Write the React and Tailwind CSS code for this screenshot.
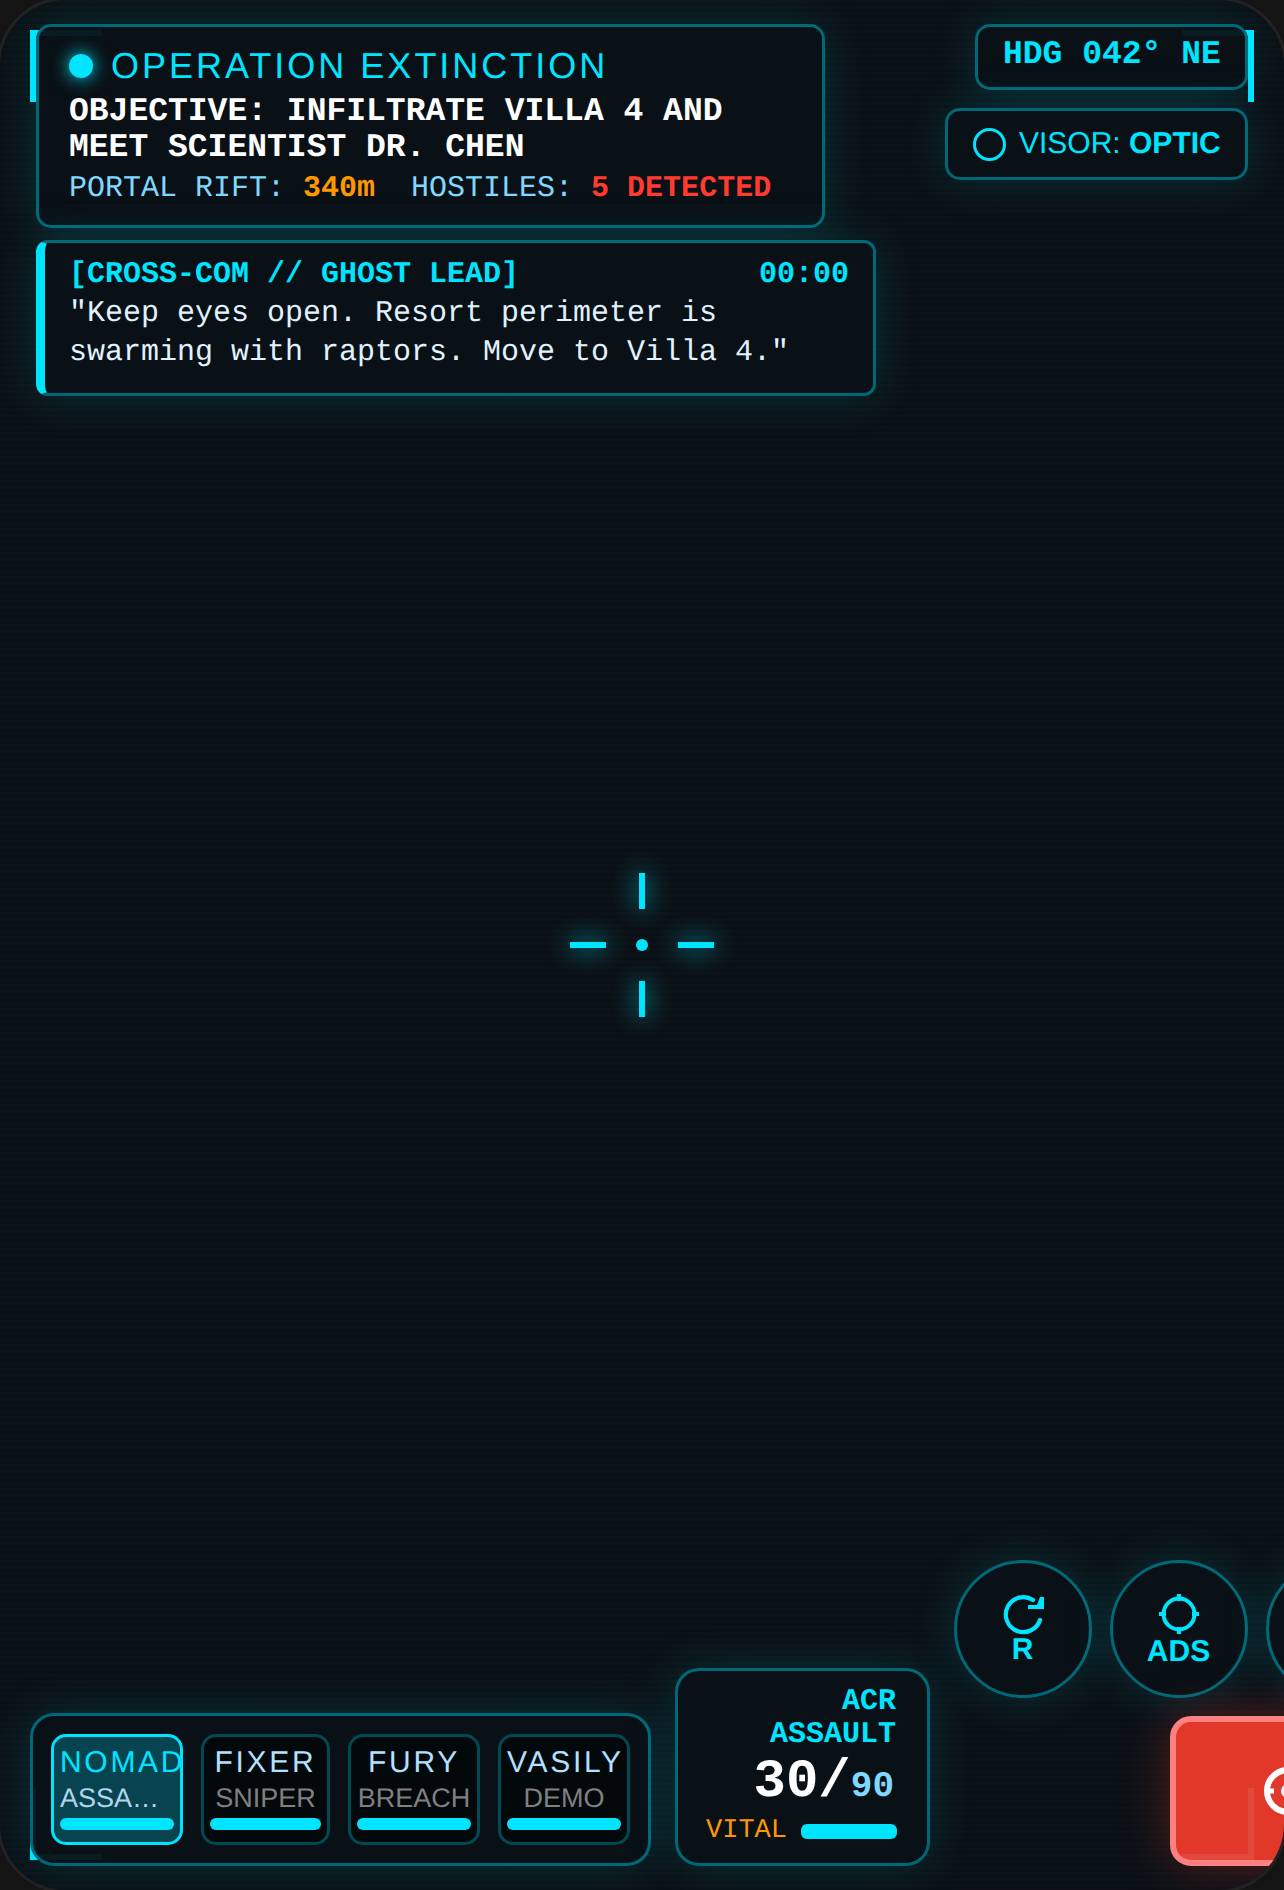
const mono = "font-['Liberation_Mono',monospace]";
const sans = "font-['Liberation_Sans',sans-serif]";
const panel = "border-[3px] border-[#006978] bg-[#091116]/95 shadow-[0_0_48px_rgba(0,229,255,0.15)]";
const tick = "absolute bg-[#00e5ff] shadow-[0_0_24px_#00e5ff]";

const squad = [
  { name: "NOMAD", role: "ASSAULT", active: true, w: "w-[132px]" },
  { name: "FIXER", role: "SNIPER", w: "w-[129px]" },
  { name: "FURY", role: "BREACH", w: "w-[132px]" },
  { name: "VASILY", role: "DEMO", w: "w-[132px]" },
];

function AgentCard({ agent }) {
  return (
    <div
      className={`${agent.w} h-[111px] shrink-0 rounded-[15px] border-[3px] px-[6px] pt-[8px] text-center ${
        agent.active ? "border-[#00e5ff] bg-[#07444f]" : "border-[#004a55] bg-[#03080b]"
      }`}
    >
      <div
        className={`text-[30px] leading-[36px] tracking-[2.7px] whitespace-nowrap ${
          agent.active ? "text-[#00e5ff]" : "text-[#b3e0ff]"
        }`}
      >
        {agent.name}
      </div>
      <div
        className={`mt-[1px] truncate text-[27px] leading-[33px] ${
          agent.active ? "text-[#b3d4ee]" : "text-[#808080]"
        }`}
      >
        {agent.role}
      </div>
      <div className="mt-[3px] h-[12px] rounded-[6px] bg-[#00e5ff]" />
    </div>
  );
}

function CircleButton({ children }) {
  return (
    <div
      className={`flex h-[138px] w-[138px] shrink-0 flex-col items-center justify-center rounded-full ${panel} text-[#00e5ff] font-bold`}
    >
      {children}
    </div>
  );
}

function Bracket({ className }) {
  return <div className={`absolute h-[72px] w-[72px] border-[#00e5ff] ${className}`} />;
}

const App = () => {
  return (
    <div className={`relative h-[1890px] w-[1284px] overflow-hidden bg-[#141414] [text-rendering:geometricPrecision] ${sans}`}>
      <div className="relative h-full w-full overflow-hidden rounded-[66px] bg-[#0c1318] shadow-[0_0_0_3px_#222222]">
        {/* scanlines */}
        <div className="absolute inset-0 bg-[repeating-linear-gradient(0deg,rgba(0,0,0,0.14)_0px,rgba(0,0,0,0.14)_3px,transparent_3px,transparent_6px)]" />

        <Bracket className="left-[30px] top-[30px] border-l-[6px] border-t-[6px]" />
        <Bracket className="right-[30px] top-[30px] border-r-[6px] border-t-[6px]" />
        <Bracket className="bottom-[30px] left-[30px] border-b-[6px] border-l-[6px]" />
        <Bracket className="bottom-[30px] right-[30px] border-b-[6px] border-r-[6px]" />

        {/* top row */}
        <div className="relative flex items-start justify-between pl-[36px] pr-[36px] pt-[24px]">
          <div className="w-[840px]">
            <div className={`h-[204px] w-[789px] rounded-[15px] pl-[30px] pt-[18px] ${panel}`}>
              <div className="flex items-center gap-[18px]">
                <span className="h-[24px] w-[24px] rounded-full bg-[#00e5ff] shadow-[0_0_18px_#00e5ff]" />
                <span className="text-[36px] leading-[42px] tracking-[3px] text-[#00e5ff]">
                  OPERATION EXTINCTION
                </span>
              </div>
              <div className={`${mono} mt-[6.5px] text-[33px] font-bold leading-[36.5px] text-white`}>
                OBJECTIVE: INFILTRATE VILLA 4 AND
                <br />
                MEET SCIENTIST DR. CHEN
              </div>
              <div className={`${mono} mt-[4.4px] whitespace-pre text-[30px] leading-[36px] text-[#80d8ff]`}>
                {"PORTAL RIFT: "}
                <b className="text-[#ff9800]">340m</b>
                {"  HOSTILES: "}
                <b className="text-[#ff3b30]">5 DETECTED</b>
              </div>
            </div>

            <div className={`mt-[12px] h-[156px] w-[840px] rounded-[12px] border-l-[9px] border-l-[#00e5ff] pl-[24px] pr-[24px] pt-[13px] ${panel}`}>
              <div className={`${mono} flex justify-between text-[30px] font-bold leading-[39px] text-[#00e5ff]`}>
                <span>[CROSS-COM // GHOST LEAD]</span>
                <span>00:00</span>
              </div>
              <p className={`${mono} text-[30px] leading-[39px] text-[#e0f2ff]`}>
                "Keep eyes open. Resort perimeter is
                <br />
                swarming with raptors. Move to Villa 4."
              </p>
            </div>
          </div>

          <div className="flex flex-col items-end gap-[18px]">
            <div className={`${mono} h-[66px] w-[273px] rounded-[15px] pl-[25px] pt-[8px] text-[33px] font-bold leading-[39px] text-[#00e5ff] ${panel}`}>
              HDG 042° NE
            </div>
            <div className={`flex h-[72px] w-[303px] items-center gap-[13px] rounded-[15px] pl-[25px] text-[30px] text-[#00e5ff] ${panel}`}>
              <span className="h-[33px] w-[33px] rounded-full border-[3px] border-[#00e5ff]" />
              <span className="mb-[2px]">
                VISOR: <b>OPTIC</b>
              </span>
            </div>
          </div>
        </div>

        {/* reticle */}
        <div className="absolute left-[570px] top-[873px] h-[144px] w-[144px]">
          <div className={`${tick} left-[69px] top-0 h-[36px] w-[6px]`} />
          <div className={`${tick} bottom-0 left-[69px] h-[36px] w-[6px]`} />
          <div className={`${tick} left-0 top-[69px] h-[6px] w-[36px]`} />
          <div className={`${tick} right-0 top-[69px] h-[6px] w-[36px]`} />
          <div className="absolute left-[66px] top-[66px] h-[12px] w-[12px] rounded-full bg-[#00e5ff]" />
        </div>

        {/* bottom controls */}
        <div className="absolute bottom-[24px] left-[30px] flex items-end gap-[24px]">
          <div className={`flex h-[153px] w-[621px] items-start gap-[18px] rounded-[24px] pl-[18px] pt-[18px] ${panel}`}>
            {squad.map((agent) => (
              <AgentCard key={agent.name} agent={agent} />
            ))}
          </div>

          <div className={`h-[198px] w-[255px] rounded-[24px] pr-[31px] pt-[15px] text-right ${panel}`}>
            <div className={`${mono} ml-auto w-[180px] text-[30px] font-bold leading-[33px] text-[#00e5ff]`}>
              ACR ASSAULT
            </div>
            <div className={`${mono} mr-[2px] mt-[4px] font-bold leading-[54px] text-white`}>
              <span className="text-[54px]">30/</span>
              <span className="text-[36px] text-[#80d8ff]">90</span>
            </div>
            <div className="-mr-[1px] -mt-[3px] flex items-start justify-end gap-[14px]">
              <span className={`${mono} text-[27px] leading-[30px] text-[#ff9800]`}>VITAL</span>
              <span className="mt-[8px] h-[15px] w-[96px] rounded-[6px] bg-[#00e5ff]" />
            </div>
          </div>
        </div>

        <div className="absolute left-[954px] top-[1560px] flex gap-[18px]">
          <CircleButton>
            <svg width="48" height="48" viewBox="0 0 48 48" fill="none" className="mb-[-2px]">
              <path d="M34 10A17.5 17.5 0 1 0 41 30" stroke="#00e5ff" strokeWidth="4.2" strokeLinecap="round" />
              <path d="M41 7h4v12H29v-4h9z" fill="#00e5ff" />
            </svg>
            <span className="mb-[5px] -ml-[1px] text-[30px] leading-[27px]">R</span>
          </CircleButton>
          <CircleButton>
            <svg width="42" height="42" viewBox="0 0 42 42" fill="none" className="mt-[2px]">
              <circle cx="21" cy="21" r="15.5" stroke="#00e5ff" strokeWidth="4" />
              <path d="M21 1v7M21 34v7M1 21h7M34 21h7" stroke="#00e5ff" strokeWidth="4.2" />
            </svg>
            <span className="-ml-[1px] text-[30px] leading-[33px]">ADS</span>
          </CircleButton>
          <CircleButton />
        </div>

        <div className="absolute left-[1170px] top-[1716px] flex h-[150px] w-[236px] items-center justify-center rounded-[21px] border-[6px] border-[#ff8080] bg-[#f53c2c]/92 shadow-[0_0_48px_rgba(229,53,41,0.35)]">
          <svg width="54" height="54" viewBox="0 0 54 54" fill="none">
            <circle cx="27" cy="27" r="21" stroke="white" strokeWidth="6" />
            <circle cx="27" cy="27" r="7" fill="white" />
            <path d="M6 27h7M41 27h7M27 6v7M27 41v7" stroke="white" strokeWidth="5" />
          </svg>
        </div>
      </div>
    </div>
  );
};

export default App;
